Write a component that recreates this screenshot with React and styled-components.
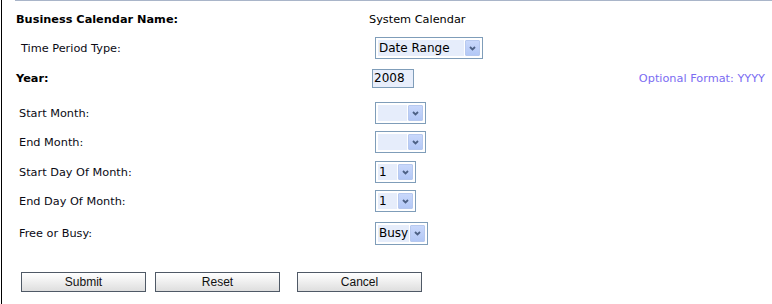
import React from "react";
import styled, { createGlobalStyle } from "styled-components";

const Global = createGlobalStyle`
  html, body { margin: 0; padding: 0; background: #fff; }
  body { font-family: "DejaVu Sans", Verdana, sans-serif; font-size: 12px; color: #000; }
`;

const Frame = styled.div`
  margin-left: 1px;
  width: 771px;
  height: 304px;
  border-left: 1px solid #000;
  box-sizing: border-box;
`;

const TopRule = styled.div`
  margin-left: 13px;
  height: 1px;
  background: #a9b5c9;
`;

const Form = styled.div`
  display: flex;
  flex-direction: column;
  padding-top: 3.5px;
`;

const Row = styled.div`
  display: grid;
  grid-template-columns: 367px 1fr auto;
  align-items: center;
  height: 29px;
  margin-top: ${(p) => p.$gap || 0}px;
`;

const Label = styled.div`
  padding-left: ${(p) => (p.$bold ? 14 : p.$indent || 17)}px;
  font-weight: ${(p) => (p.$bold ? "bold" : "normal")};
  font-size: 11.3px;
  color: ${(p) => (p.$bold ? "#000" : "#0a0a14")};
  white-space: nowrap;
`;

const Value = styled.div`
  display: flex;
  align-items: center;
  font-size: 11.3px;
  white-space: nowrap;
`;

const Hint = styled.div`
  padding-right: 7px;
  color: #7b6cf2;
  font-size: 11.3px;
  white-space: nowrap;
`;

const SelectBox = styled.div`
  margin-left: 6px;
  width: ${(p) => p.$w}px;
  height: ${(p) => p.$h || 22}px;
  box-sizing: border-box;
  border: 1px solid #7f9db9;
  background: #fff;
  padding: 2px;
  display: flex;
  gap: 1px;
`;

const Field = styled.div`
  flex: 1;
  background: #e6edfb;
  display: flex;
  align-items: center;
  padding-left: 1px;
  font-size: 12px;
  overflow: hidden;
`;

const ArrowBtn = styled.div`
  width: 15px;
  box-sizing: border-box;
  border: 1px solid #b7c9ef;
  border-radius: 1px;
  background: linear-gradient(#c9d8fb, #b3c8f6);
  display: flex;
  align-items: center;
  justify-content: center;
`;

const YearInput = styled.div`
  margin-left: 3px;
  width: 42px;
  height: 19px;
  box-sizing: border-box;
  border: 1px solid #7f9db9;
  background: #e8eefb;
  display: flex;
  align-items: center;
  padding-left: 1px;
  font-size: 12px;
`;

const ButtonRow = styled.div`
  display: flex;
  padding-left: 19px;
  margin-top: 24.5px;
`;

const Button = styled.div`
  width: 125px;
  height: 20px;
  box-sizing: border-box;
  margin-left: ${(p) => p.$gap || 0}px;
  border: 1px solid #4f5966;
  background: linear-gradient(#ffffff 0%, #f2f2f2 40%, #dedede 100%);
  display: flex;
  align-items: center;
  justify-content: center;
  font-family: "Liberation Sans", Arial, sans-serif;
  font-size: 12px;
  color: #111;
`;

const Chevron = () => (
  <svg width="7" height="5" viewBox="0 0 7 5">
    <path d="M1 1 L3.5 3.5 L6 1" fill="none" stroke="#4d6185" strokeWidth="1.8" />
  </svg>
);

const Select = ({ w, h, value }) => (
  <SelectBox $w={w} $h={h}>
    <Field>{value}</Field>
    <ArrowBtn>
      <Chevron />
    </ArrowBtn>
  </SelectBox>
);

export default function App() {
  return (
    <>
      <Global />
      <Frame>
        <TopRule />
        <Form>
          <Row>
            <Label $bold>Business Calendar Name:</Label>
            <Value>System Calendar</Value>
          </Row>
          <Row>
            <Label $indent={19}>Time Period Type:</Label>
            <Value>
              <Select w={108} value="Date Range" />
            </Value>
          </Row>
          <Row $gap={1}>
            <Label $bold>Year:</Label>
            <Value>
              <YearInput>2008</YearInput>
            </Value>
            <Hint>Optional Format: YYYY</Hint>
          </Row>
          <Row $gap={6}>
            <Label>Start Month:</Label>
            <Value>
              <Select w={51} value="" />
            </Value>
          </Row>
          <Row>
            <Label>End Month:</Label>
            <Value>
              <Select w={51} value="" />
            </Value>
          </Row>
          <Row $gap={1}>
            <Label>Start Day Of Month:</Label>
            <Value>
              <Select w={41} value="1" />
            </Value>
          </Row>
          <Row>
            <Label>End Day Of Month:</Label>
            <Value>
              <Select w={41} value="1" />
            </Value>
          </Row>
          <Row $gap={3}>
            <Label>Free or Busy:</Label>
            <Value>
              <Select w={53} h={23} value="Busy" />
            </Value>
          </Row>
          <ButtonRow>
            <Button>Submit</Button>
            <Button $gap={9}>Reset</Button>
            <Button $gap={17}>Cancel</Button>
          </ButtonRow>
        </Form>
      </Frame>
    </>
  );
}
